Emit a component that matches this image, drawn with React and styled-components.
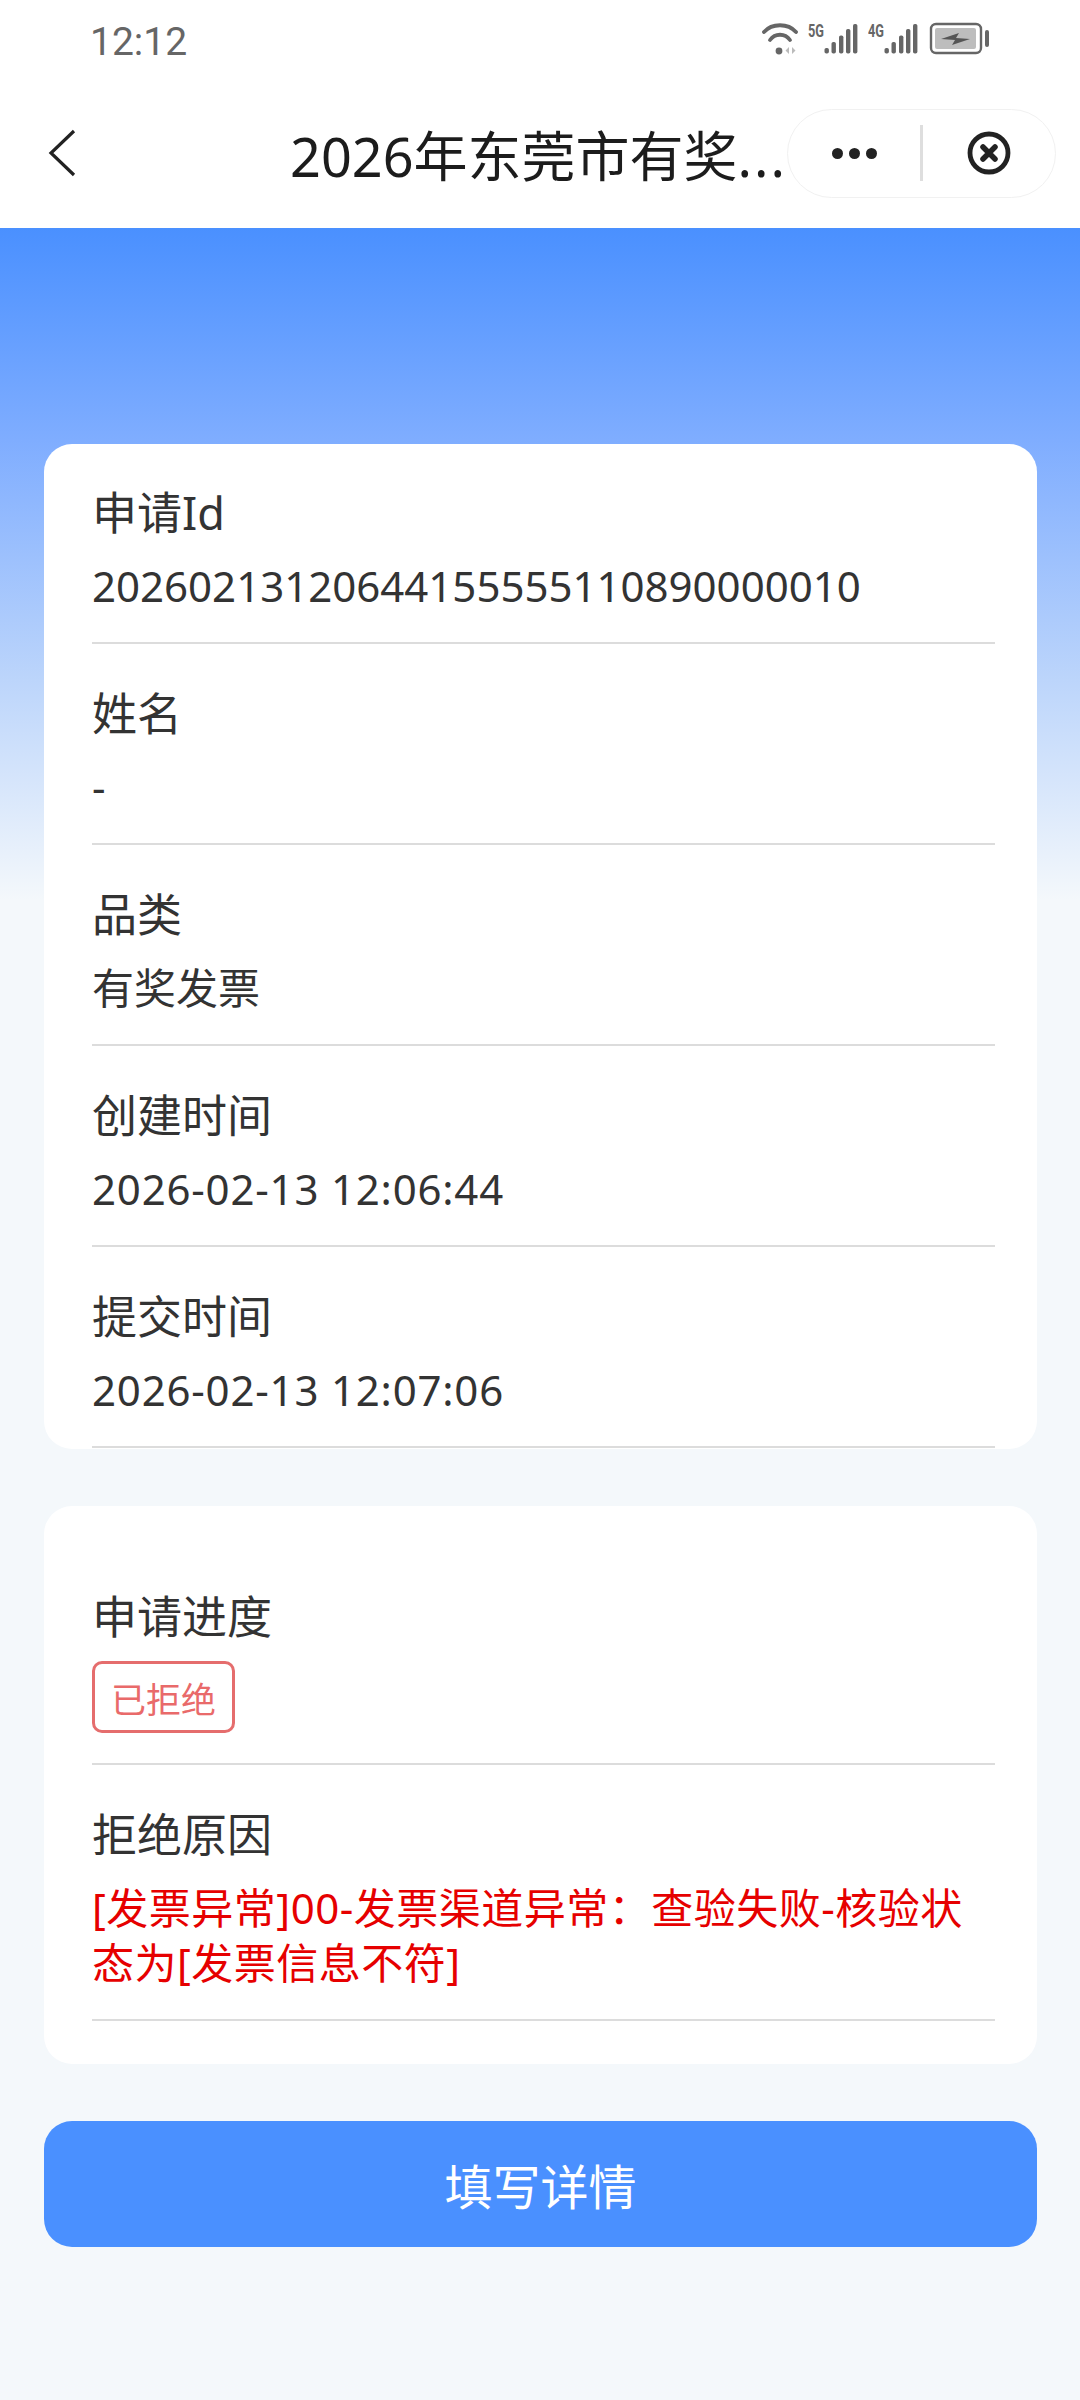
import React from "react";
import styled, { createGlobalStyle } from "styled-components";

const GlobalStyle = createGlobalStyle`
  html, body {
    margin: 0;
    padding: 0;
    background: #f4f8fb;
  }
  * {
    box-sizing: border-box;
  }
`;

const FONT = `"Noto Sans", "Noto Sans CJK SC", sans-serif`;

const baseRows = [
  { label: "申请Id", value: "20260213120644155555110890000010" },
  { label: "姓名", value: "-" },
  { label: "品类", value: "有奖发票" },
  { label: "创建时间", value: "2026-02-13 12:06:44", isTime: true },
  { label: "提交时间", value: "2026-02-13 12:07:06", isTime: true },
];

const signalBars = [
  { x: 16.5, y: 26, h: 5.5 },
  { x: 23.5, y: 20, h: 11.5 },
  { x: 31, y: 13.5, h: 18 },
  { x: 38, y: 7, h: 24.5 },
  { x: 45, y: 2, h: 29.5 },
];

const WifiIcon = () => (
  <svg width="36" height="34" viewBox="0 0 36 34" fill="none">
    <path d="M2 10C10 1 26 1 34 10" stroke="#666" strokeWidth="3.8" strokeLinecap="round" />
    <path d="M8 18C13 11 23 11 28 18" stroke="#666" strokeWidth="3.8" strokeLinecap="round" />
    <circle cx="17" cy="29" r="3.4" fill="#666" />
    <path d="M27 25l-3.500 3.500 3.500 3.500zM30 25l3.500 3.500-3.500 3.500z" fill="#bbb" />
  </svg>
);

const SignalIcon = ({ tag }) => (
  <svg width="50" height="46" viewBox="0 -6 50 46">
    <text
      x="0"
      y="15"
      fontFamily="Roboto, sans-serif"
      fontSize="18"
      fontWeight="700"
      fill="#666"
      textLength="16"
      lengthAdjust="spacingAndGlyphs"
    >
      {tag}
    </text>
    {signalBars.map((bar) => (
      <rect key={bar.x} x={bar.x} y={bar.y} width="4.400" height={bar.h} rx="1.800" fill="#666" />
    ))}
  </svg>
);

const BatteryIcon = () => (
  <svg width="62" height="34" viewBox="0 0 62 34">
    <rect x="3" y="2" width="50" height="29" rx="5" fill="none" stroke="#666" strokeWidth="2.400" />
    <rect x="7" y="6" width="41" height="21" rx="2" fill="#bdbdbd" />
    <path d="M13 17l18-6-3 5 14 1-18 6 3-5z" fill="#555" />
    <rect x="57" y="8" width="4" height="17" rx="2" fill="#666" />
  </svg>
);

const BackIcon = () => (
  <svg width="30" height="50" viewBox="0 0 30 50" fill="none">
    <path d="M28 3L5 25l23 22" stroke="#222" strokeWidth="3.200" />
  </svg>
);

const CloseIcon = () => (
  <svg width="46" height="46" viewBox="0 0 46 46" fill="none">
    <circle cx="23" cy="23" r="19" stroke="#222" strokeWidth="4.800" />
    <path d="M17 17l12 12M29 17L17 29" stroke="#222" strokeWidth="5.500" strokeLinecap="round" />
  </svg>
);

const InfoRow = ({ label, children }) => (
  <Row>
    <Label>{label}</Label>
    {children}
  </Row>
);

const App = () => {
  return (
    <Page>
      <GlobalStyle />
      <Header>
        <StatusBar>
          <Clock>12:12</Clock>
          <StatusIcons>
            <WifiIcon />
            <SignalIcon tag="5G" />
            <SignalIcon tag="4G" />
            <BatteryIcon />
          </StatusIcons>
        </StatusBar>
        <NavBar>
          <BackButton>
            <BackIcon />
          </BackButton>
          <Title>
            2026年东莞市有奖<Ellipsis>...</Ellipsis>
          </Title>
          <Capsule>
            <Dots>
              <Dot />
              <Dot />
              <Dot />
            </Dots>
            <CapsuleLine />
            <CloseWrap>
              <CloseIcon />
            </CloseWrap>
          </Capsule>
        </NavBar>
      </Header>
      <Content>
        <InfoCard>
          {baseRows.map((row) => (
            <InfoRow key={row.label} label={row.label}>
              <Value $time={row.isTime}>{row.value}</Value>
            </InfoRow>
          ))}
        </InfoCard>
        <ProgressCard>
          <InfoRow label="申请进度">
            <StatusTag>已拒绝</StatusTag>
          </InfoRow>
          <InfoRow label="拒绝原因">
            <Reason>[发票异常]00-发票渠道异常：查验失败-核验状态为[发票信息不符]</Reason>
          </InfoRow>
        </ProgressCard>
        <SubmitButton>填写详情</SubmitButton>
      </Content>
    </Page>
  );
};

const Page = styled.div`
  width: 1080px;
  height: 2400px;
  overflow: hidden;
  display: flex;
  flex-direction: column;
  font-family: ${FONT};
  background: linear-gradient(
    180deg,
    #4a90ff 228px,
    #7fadff 440px,
    #bcd5fb 680px,
    #f4f8fb 900px
  );
`;

const Header = styled.header`
  height: 228px;
  background: #fff;
  flex-shrink: 0;
`;

const StatusBar = styled.div`
  height: 84px;
  display: flex;
  align-items: center;
  justify-content: space-between;
  padding: 0 90px;
`;

const Clock = styled.span`
  font-family: Roboto, sans-serif;
  font-size: 39px;
  color: #666;
`;

const StatusIcons = styled.div`
  display: flex;
  align-items: center;
  gap: 10px;
  margin-bottom: 6px;
`;

const NavBar = styled.div`
  height: 144px;
  display: flex;
  align-items: center;
  padding: 0 24px 6px 46px;
`;

const BackButton = styled.div`
  width: 244px;
  flex-shrink: 0;
  display: flex;
  align-items: center;
`;

const Title = styled.h1`
  margin: 0;
  flex: 1;
  min-width: 0;
  font-size: 54px;
  font-weight: 400;
  color: #1c1c1c;
  white-space: nowrap;
`;

const Ellipsis = styled.span`
  letter-spacing: 2px;
`;

const Capsule = styled.div`
  width: 269px;
  height: 89px;
  flex-shrink: 0;
  border: 1px solid #f1f1f1;
  border-radius: 45px;
  background: #fff;
  display: flex;
  align-items: center;
`;

const Dots = styled.div`
  flex: 1;
  display: flex;
  justify-content: center;
  gap: 6px;
`;

const Dot = styled.span`
  width: 11px;
  height: 11px;
  border-radius: 50%;
  background: #222;
`;

const CapsuleLine = styled.span`
  width: 3px;
  height: 56px;
  background: #dedede;
`;

const CloseWrap = styled.div`
  flex: 1;
  display: flex;
  justify-content: center;
`;

const Content = styled.main`
  display: flex;
  flex-direction: column;
  padding: 216px 43px 0 44px;
`;

const Card = styled.section`
  background: #fff;
  border-radius: 28px;
  padding: 0 42px 0 48px;
`;

const InfoCard = styled(Card)`
  height: 1005px;
  overflow: hidden;
  margin-bottom: 57px;
`;

const ProgressCard = styled(Card)`
  height: 558px;
  padding-top: 42px;
  margin-bottom: 57px;
`;

const Row = styled.div`
  border-bottom: 2px solid #dcdcdc;
  padding: 39px 0 29px;

  &:first-child {
    padding-top: 38px;
  }
`;

const Label = styled.div`
  font-size: 45px;
  line-height: 62px;
  color: #333;
`;

const Value = styled.div`
  margin-top: 15px;
  font-size: 42px;
  line-height: 54px;
  letter-spacing: ${(props) => (props.$time ? "0.8px" : "0")};
  color: #333;
`;

const StatusTag = styled.div`
  display: flex;
  align-items: center;
  width: fit-content;
  height: 72px;
  margin: 13px 0 1px;
  padding: 0 16px;
  border: 3px solid #e56d6d;
  border-radius: 10px;
  font-size: 35px;
  color: #e96a6a;
`;

const Reason = styled.div`
  margin-top: 14px;
  max-width: 885px;
  font-size: 42px;
  line-height: 55px;
  letter-spacing: 0.5px;
  color: #e60000;
`;

const SubmitButton = styled.button`
  height: 126px;
  border: none;
  border-radius: 28px;
  background: #4a90ff;
  color: #fff;
  font-family: ${FONT};
  font-size: 48px;
`;

export default App;
